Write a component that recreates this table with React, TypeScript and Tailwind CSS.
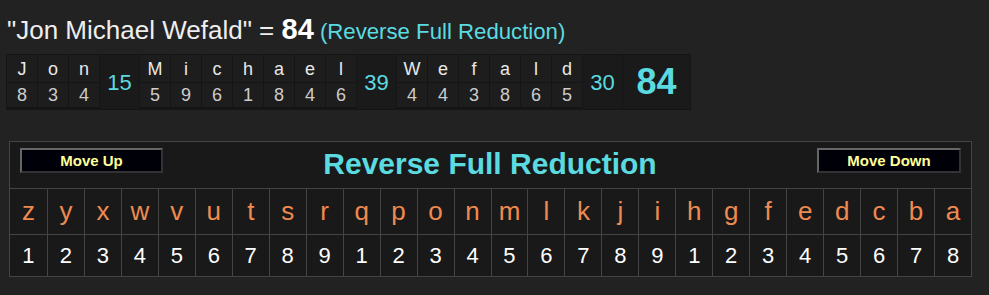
import React from 'react'

const words = [
  { letters: ['J', 'o', 'n'], values: [8, 3, 4], sum: 15 },
  { letters: ['M', 'i', 'c', 'h', 'a', 'e', 'l'], values: [5, 9, 6, 1, 8, 4, 6], sum: 39 },
  { letters: ['W', 'e', 'f', 'a', 'l', 'd'], values: [4, 4, 3, 8, 6, 5], sum: 30 },
]

const alphabet = 'zyxwvutsrqponmlkjihgfedcba'.split('')
const reduce = (i: number) => (i % 9) + 1

function NavButton({ label, width }: { label: string; width: string }) {
  return (
    <button
      className={`${width} h-[25px] border-2 border-t-[#666] border-l-[#666] border-b-[#333] border-r-[#333] bg-[#000008] text-[15px] font-bold leading-none text-[#ffff99]`}
    >
      {label}
    </button>
  )
}

export default function App() {
  const total = words.reduce((acc, w) => acc + w.sum, 0)

  return (
    <div className="w-[989px] h-[295px] overflow-hidden bg-[#222222] font-['Liberation_Sans',Arial,sans-serif]">
      {/* phrase heading */}
      <div className="whitespace-nowrap pl-[7px] pt-[14px] leading-[30px]">
        <span className="text-[26px] text-[#eeeeee]">"Jon Michael Wefald" = </span>
        <span className="text-[29px] font-bold text-white">{total}</span>
        <span className="text-[22.2px] text-[#5bdbe0]"> (Reverse Full Reduction)</span>
      </div>

      {/* letter breakdown */}
      <div className="ml-[6px] mt-[5px] inline-flex gap-px bg-[#151515] p-px">
        {words.map((w, wi) => (
          <React.Fragment key={wi}>
            {w.letters.map((l, li) => (
              <div key={li} className="flex flex-col gap-px">
                <div className="flex h-[27px] w-[30px] items-center justify-center bg-[#1d1d1d] pt-[2px] text-[18px] text-[#e8e8e8]">
                  {l}
                </div>
                <div className="flex h-[24px] w-[30px] items-center justify-center bg-[#1d1d1d] text-[18px] text-[#cccccc]">
                  {w.values[li]}
                </div>
              </div>
            ))}
            <div className="flex w-[39px] items-center justify-center bg-[#1a1a1a] text-[22px] text-[#5bdbe0]">
              {w.sum}
            </div>
          </React.Fragment>
        ))}
        <div className="flex w-[67px] items-center justify-center bg-[#1a1a1a] text-[36px] font-bold text-[#5bdbe0]">
          {total}
        </div>
      </div>

      {/* cipher chart */}
      <div className="ml-[9px] mt-[31px] w-[963px] border border-[#444] bg-[#191919]">
        <div className="flex h-[46px] items-start justify-between px-[10px] pt-[6px]">
          <NavButton label="Move Up" width="w-[143px]" />
          <div className="mt-[1px] text-[30px] font-bold leading-none text-[#5bdbe0]">
            Reverse Full Reduction
          </div>
          <NavButton label="Move Down" width="w-[144px]" />
        </div>
        <div className="grid grid-cols-[repeat(26,minmax(0,1fr))] border-t border-[#444]">
          {alphabet.map((c, i) => (
            <div
              key={c}
              className={`flex h-[45px] items-center justify-center text-[26px] text-[#ef8a50] ${i > 0 ? 'border-l border-[#444]' : ''}`}
            >
              {c}
            </div>
          ))}
          {alphabet.map((c, i) => (
            <div
              key={c + 'n'}
              className={`flex h-[42px] items-center justify-center border-t border-[#444] text-[22px] text-white ${i > 0 ? 'border-l' : ''}`}
            >
              {reduce(i)}
            </div>
          ))}
        </div>
      </div>
    </div>
  )
}
